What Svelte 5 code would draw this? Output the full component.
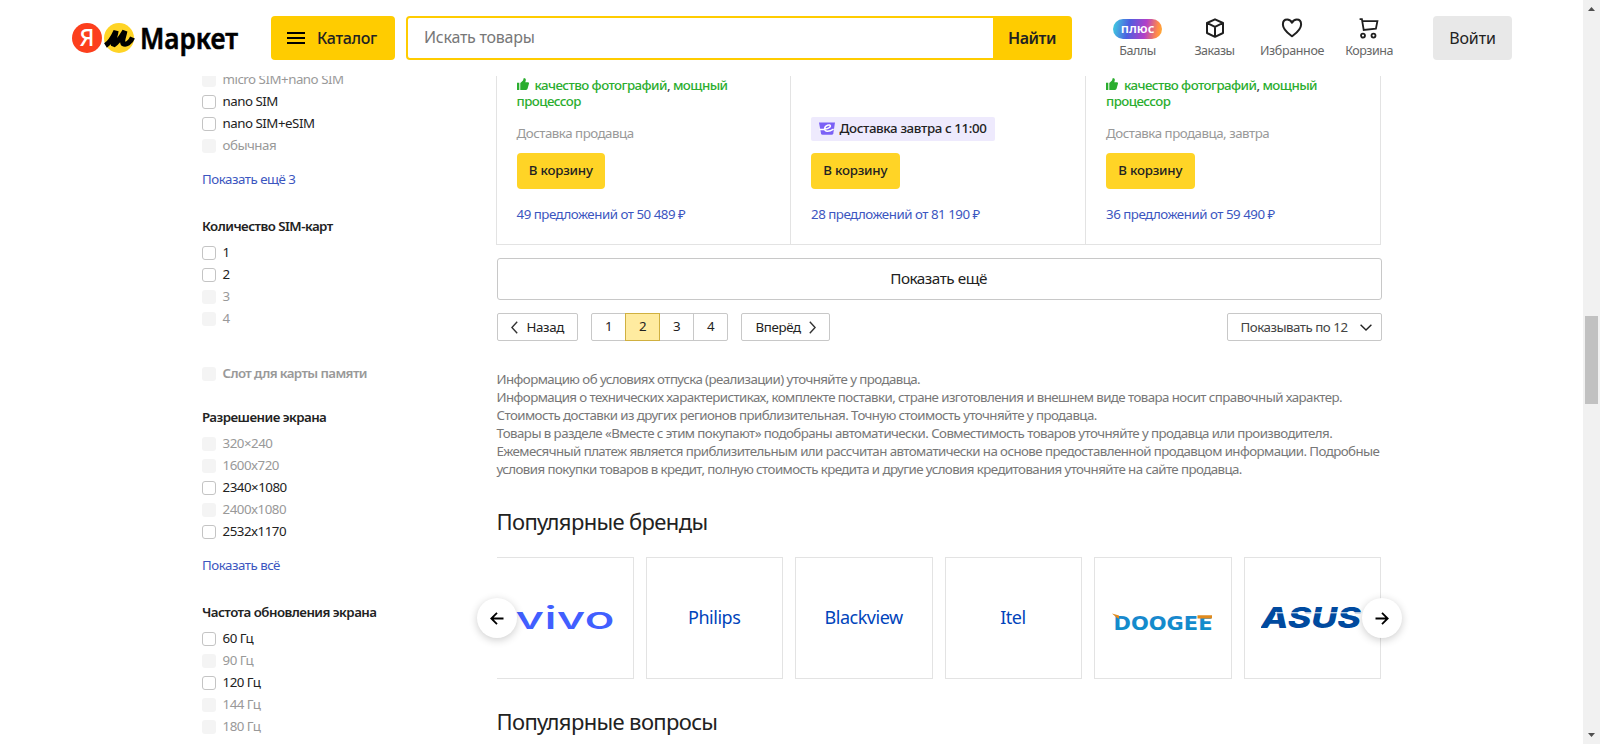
<script>
  const topRows = [
    { label: 'micro SIM+nano SIM', off: true },
    { label: 'nano SIM' },
    { label: 'nano SIM+eSIM' },
    { label: 'обычная', off: true }
  ];
  const filters = [
    { rows: topRows, more: 'Показать ещё 3' },
    {
      title: 'Количество SIM-карт',
      rows: [{ label: '1' }, { label: '2' }, { label: '3', off: true }, { label: '4', off: true }]
    },
    { single: true, rows: [{ label: 'Слот для карты памяти', off: true }] },
    {
      title: 'Разрешение экрана',
      rows: [
        { label: '320×240', off: true },
        { label: '1600x720', off: true },
        { label: '2340×1080' },
        { label: '2400x1080', off: true },
        { label: '2532x1170' }
      ],
      more: 'Показать всё'
    },
    {
      title: 'Частота обновления экрана',
      rows: [
        { label: '60 Гц' },
        { label: '90 Гц', off: true },
        { label: '120 Гц' },
        { label: '144 Гц', off: true },
        { label: '180 Гц', off: true }
      ]
    }
  ];
  const offers = [
    { pros: true, delivery: 'Доставка продавца', link: '49 предложений от 50 489 ₽' },
    { express: 'Доставка завтра с 11:00', link: '28 предложений от 81 190 ₽' },
    { pros: true, delivery: 'Доставка продавца, завтра', link: '36 предложений от 59 490 ₽' }
  ];
  const pages = [1, 2, 3, 4];
  const legal = [
    'Информацию об условиях отпуска (реализации) уточняйте у продавца.',
    'Информация о технических характеристиках, комплекте поставки, стране изготовления и внешнем виде товара носит справочный характер.',
    'Стоимость доставки из других регионов приблизительная. Точную стоимость уточняйте у продавца.',
    'Товары в разделе «Вместе с этим покупают» подобраны автоматически. Совместимость товаров уточняйте у продавца или производителя.',
    'Ежемесячный платеж является приблизительным или рассчитан автоматически на основе предоставленной продавцом информации. Подробные',
    'условия покупки товаров в кредит, полную стоимость кредита и другие условия кредитования уточняйте на сайте продавца.'
  ];
  const brands = ['vivo', 'Philips', 'Blackview', 'Itel', 'DOOGEE', 'ASUS'];
</script>

<div class="page">
  <div class="viewport">
    <header>
      <a class="logo" href="#top" aria-label="Яндекс Маркет">
        <svg width="62" height="30" viewBox="0 0 62 30">
          <circle cx="15" cy="15" r="15" fill="#fc3f1d" />
          <text x="15" y="23.2" text-anchor="middle" class="ya">Я</text>
          <circle cx="47" cy="15" r="15" fill="#ffd426" />
          <path d="M33.500 22.500C37.500 20 41 14.500 44 8 43.500 13 40.500 18.500 41.500 22 46 19.500 49.500 13.500 52.800 8 52 13 49.500 18 51 20.500 54 22.500 58.500 19.500 60.500 14.500" fill="none" stroke="#000" stroke-width="5.200" stroke-linejoin="bevel" />
        </svg>
        <svg width="100" height="38" viewBox="0 0 100 38">
          <text x="0" y="28" class="word" textLength="98" lengthAdjust="spacingAndGlyphs">Маркет</text>
        </svg>
      </a>
      <button class="catalog">
        <svg width="18" height="12" viewBox="0 0 18 12"><path d="M0 1h18M0 6h18M0 11h18" stroke="#000" stroke-width="2" /></svg>
        <span>Каталог</span>
      </button>
      <div class="search">
        <div class="field">Искать товары</div>
        <button>Найти</button>
      </div>
      <nav>
        <a class="n1" href="#plus"><span class="ic"><b class="plus">плюс</b></span><span>Баллы</span></a>
        <a class="n2" href="#orders">
          <span class="ic">
            <svg width="20" height="20" viewBox="0 0 20 20" fill="none" stroke="#1f1f1f" stroke-width="2" stroke-linejoin="round"><path d="M10 1.3 18 5v10l-8 3.800L2 15V5zM2.400 5.200 10 8.800l7.600-3.600M10 9v9.500" /></svg>
          </span>
          <span>Заказы</span>
        </a>
        <a class="n3" href="#fav">
          <span class="ic">
            <svg width="22" height="20" viewBox="0 0 22 20" fill="none" stroke="#1f1f1f" stroke-width="2" stroke-linejoin="round"><path d="M11 18.300C8.500 16.300 1.900 12 1.900 6.400 1.900 3.400 3.700 1.500 6.200 1.500c2.200 0 3.800 1.200 4.800 3.200 1-2 2.600-3.200 4.800-3.200 2.500 0 4.300 1.900 4.300 4.900 0 5.600-6.600 9.900-9.100 11.900z" /></svg>
          </span>
          <span>Избранное</span>
        </a>
        <a class="n4" href="#cart">
          <span class="ic">
            <svg width="20" height="21" viewBox="0 0 20 21" fill="none" stroke="#1f1f1f" stroke-width="1.800"><path d="M.6 1.200h2.300l1.800 10.700 12.200-1.300 1.500-7.500H3.400" /><circle cx="4" cy="17.600" r="2" /><circle cx="14.500" cy="17.600" r="2" /></svg>
          </span>
          <span>Корзина</span>
        </a>
      </nav>
      <button class="login">Войти</button>
    </header>

    <div class="body">
      <aside>
        {#each filters as group}
          <section class:single={group.single}>
            {#if group.title}<h4>{group.title}</h4>{/if}
            {#each group.rows as row}
              <label class:off={row.off}><i></i><span>{row.label}</span></label>
            {/each}
            {#if group.more}<a class="more" href="#more">{group.more}</a>{/if}
          </section>
        {/each}
      </aside>

      <main>
        <div class="offers">
          {#each offers as offer}
            <article>
              {#if offer.pros}
                <p class="pros">
                  <svg width="12" height="12" viewBox="0 0 12 12" fill="#2bad2f"><path d="M0 4.800h2.300V12H0zM3.300 5 6 2.600 6.800 0c1.400 0 2.200.9 2 2.200L8.300 4.200H11c.8 0 1.200.7 1 1.400l-1.400 5c-.2.900-.8 1.400-1.600 1.400H3.300z" /></svg>
                  качество фотографий<em>,</em> мощный процессор
                </p>
              {/if}
              {#if offer.express}
                <div class="express">
                  <svg width="16" height="13" viewBox="0 0 16 13"><path d="M0 .5h16L14.300 11.500Q14 12.700 12.800 12.700H3.500Q2.300 12.700 2 11.500z" fill="#7b61f6" /><path d="M.4 7.400C6.400 8 11.600 6 11.400 3.900 11.200 2 6 3 5.600 6.600c-.3 3.500 4.400 3.400 9 .6" fill="none" stroke="#fff" stroke-width="1.500" /></svg>
                  <span>{offer.express}</span>
                </div>
              {:else}
                <div class="delivery">{offer.delivery}</div>
              {/if}
              <button class="buy">В корзину</button>
              <a class="link" href="#offers">{offer.link}</a>
            </article>
          {/each}
        </div>

        <button class="show">Показать ещё</button>

        <div class="pager">
          <button class="prev">
            <svg width="7" height="13" viewBox="0 0 7 13" fill="none" stroke="#333" stroke-width="1.400"><path d="M6.200.8.900 6.500l5.300 5.700" /></svg>
            <span>Назад</span>
          </button>
          <div class="pages">
            {#each pages as n}<a href="#p{n}" class:active={n === 2}>{n}</a>{/each}
          </div>
          <button class="next">
            <span>Вперёд</span>
            <svg width="7" height="13" viewBox="0 0 7 13" fill="none" stroke="#333" stroke-width="1.400"><path d="M.8.800l5.300 5.700-5.300 5.700" /></svg>
          </button>
          <button class="count">
            <span>Показывать по 12</span>
            <svg width="12" height="7" viewBox="0 0 12 7" fill="none" stroke="#222" stroke-width="1.400"><path d="M.6.700 6 6 11.400.700" /></svg>
          </button>
        </div>

        <div class="legal">
          {#each legal as line}<div>{line}</div>{/each}
        </div>

        <h2>Популярные бренды</h2>
        <div class="carousel">
          <div class="track">
            {#each brands as brand}
              <a class="brand" class:first={brand === 'vivo'} href="#brand">
                {#if brand === 'vivo'}
                  <svg width="100" height="40" viewBox="0 0 100 40"><text x="0.500" y="31" class="vivo" textLength="99" lengthAdjust="spacingAndGlyphs">vivo</text></svg>
                {:else if brand === 'DOOGEE'}
                  <svg width="101" height="40" viewBox="0 0 101 40"><defs><linearGradient id="dg" x1="0" x2="0" y1="0" y2="1"><stop offset="0" stop-color="#1d86cf" /><stop offset="1" stop-color="#0c8fc9" /></linearGradient></defs><text x="1.500" y="32" class="doogee" textLength="99" lengthAdjust="spacingAndGlyphs">DOOGEE</text><path d="M0 15.500l7 2v3.300L4.500 19.500zM85.500 17.200H100v3.300H85.500z" fill="#e08a1e" /></svg>
                {:else if brand === 'ASUS'}
                  <svg width="101" height="40" viewBox="0 0 101 40"><text x="0" y="29.800" class="asus" textLength="100" lengthAdjust="spacingAndGlyphs">ASUS</text><path d="M14 14.800h86" stroke="#fff" stroke-width="1" /></svg>
                {:else}
                  <span>{brand}</span>
                {/if}
              </a>
            {/each}
          </div>
          <button class="arrow left" aria-label="Назад"><svg width="14" height="13" viewBox="0 0 14 13" fill="none" stroke="#000" stroke-width="1.800"><path d="M13.500 6.500H1.500M7 .8 1.300 6.500 7 12.200" /></svg></button>
          <button class="arrow right" aria-label="Вперёд"><svg width="14" height="13" viewBox="0 0 14 13" fill="none" stroke="#000" stroke-width="1.800"><path d="M.5 6.500h12M7 .8l5.700 5.700L7 12.200" /></svg></button>
        </div>
        <h2 class="second">Популярные вопросы</h2>
      </main>
    </div>
  </div>

  <div class="scrollbar">
    <svg width="7" height="4" viewBox="0 0 7 4"><path d="M0 4 3.500 0 7 4z" fill="#505050" /></svg>
    <div class="thumb"></div>
    <svg width="7" height="4" viewBox="0 0 7 4"><path d="M0 0 3.500 4 7 0z" fill="#505050" /></svg>
  </div>
</div>

<style>
  :global(body) { margin: 0; background: #fff; }
  .page { display: flex; height: 744px; overflow: hidden; color: #222; font: 13.300px/20px 'Noto Sans', 'Open Sans', sans-serif; letter-spacing: -0.480px; }
  .page * { box-sizing: border-box; }
  a { color: inherit; text-decoration: none; }
  button { font: inherit; letter-spacing: inherit; color: inherit; border: 0; padding: 0; margin: 0; background: none; white-space: nowrap; }
  svg { display: block; flex: none; }
  .viewport { width: 1583px; height: 744px; display: flex; flex-direction: column; overflow: hidden; }

  header { flex: none; height: 76px; padding: 16px 0 0 72px; display: flex; align-items: flex-start; }
  .logo { display: flex; gap: 6px; width: 199px; padding-top: 7px; }
  .logo svg { overflow: visible; }
  .logo svg + svg { margin-top: -2px; }
  .ya { font: 500 23px 'Noto Sans', sans-serif; fill: #fff; letter-spacing: 0; }
  .word { font: 600 29.500px 'Noto Sans', sans-serif; fill: #000; stroke: #000; stroke-width: 0.600px; letter-spacing: 0; }
  .catalog { width: 124px; height: 44px; border-radius: 4px; background: #fc0; display: flex; align-items: center; gap: 12px; padding-left: 16px; font-size: 16px; font-weight: 500; letter-spacing: -0.350px; }
  .search { margin-left: 11px; width: 666px; height: 44px; display: flex; border: 2px solid #fc0; border-radius: 4px; background: #fc0; }
  .field { width: 585px; background: #fff; border-radius: 2px 0 0 2px; padding-left: 16px; font-size: 16px; line-height: 38px; color: #777; letter-spacing: -0.250px; }
  .search button { flex: 1; padding-left: 1px; font-size: 16px; font-weight: 600; line-height: 37px; }
  nav { display: flex; margin-left: 41px; width: 320px; font-size: 12.500px; line-height: 16px; color: #666; }
  nav a { display: flex; flex-direction: column; align-items: center; white-space: nowrap; }
  .ic { height: 27px; display: flex; align-items: flex-start; padding-top: 2px; }
  .n1 { width: 49px; }
  .n2 { width: 42px; margin-left: 31.500px; }
  .n3 { width: 66px; margin-left: 23.500px; letter-spacing: -0.350px; }
  .n4 { width: 50px; margin-left: 19px; }
  .plus { width: 49px; height: 20px; margin-top: 1px; border-radius: 10px; color: #fff; font-weight: 600; font-size: 13px; line-height: 18px; text-align: center; letter-spacing: 0; background: linear-gradient(100deg, #3dd3e0 0%, #4d5fe0 32%, #b33fc8 65%, #ff8a4a 88%, #ffb52e 100%); }
  .login { width: 79px; height: 44px; border-radius: 4px; background: #e8e8e8; font-size: 16px; letter-spacing: -0.150px; }

  .body { flex: 1; display: flex; overflow: hidden; align-items: flex-start; padding-left: 202px; }
  aside { width: 294px; flex: none; margin-top: -7px; }
  section + section { margin-top: 27px; }
  section.single { margin-top: 33px; font-weight: 600; letter-spacing: -0.600px; }
  section.single + section { margin-top: 22px; }
  h4 { margin: 0 0 6px; font-size: 13.300px; font-weight: 600; line-height: 20px; letter-spacing: -0.530px; }
  label { display: flex; height: 22px; gap: 6.500px; }
  label i { width: 14px; height: 14px; margin-top: 4px; border: 1px solid #c4c4c4; border-radius: 3px; }
  label.off { color: #999; }
  label.off i { border: 0; background: #f4f4f4; }
  .more, .link { color: #3c56c0; }
  .more { display: block; margin-top: 12px; }

  main { width: 886px; flex: none; display: flex; flex-direction: column; }
  .offers { display: flex; height: 169px; width: 885px; border: solid #e3e3e3; border-width: 0 1px 1px 0; }
  article { width: 295px; border-left: 1px solid #e3e3e3; padding: 0 20px; display: flex; flex-direction: column; justify-content: flex-end; align-items: flex-start; padding-bottom: 20px; }
  article:first-child { width: 294px; padding-left: 19.500px; }
  .pros { margin: 0 0 14px; width: 225px; line-height: 16px; font-weight: 500; color: #2bad2f; letter-spacing: -0.560px; }
  .pros svg { display: inline-block; vertical-align: 0; margin-right: 3px; }
  .pros em { font-style: normal; color: #444; }
  .delivery { color: #999; margin-bottom: 10px; }
  .express { height: 24px; width: 184px; margin-bottom: 12px; border-radius: 2px; background: #eeeafd; display: flex; align-items: center; gap: 4.500px; padding: 0 8px 1px; font-weight: 500; line-height: 22px; white-space: nowrap; letter-spacing: -0.370px; }
  .express span { margin-top: -1px; }
  .buy { width: 88.500px; height: 36px; border-radius: 4px; background: #ffd426; font-weight: 500; line-height: 33px; padding-bottom: 2px; letter-spacing: -0.200px; }
  .link { margin-top: 15px; }

  .show { margin: 13px 0 0 1px; width: 885px; height: 42px; border: 1px solid #c8c8c8; border-radius: 3px; font-size: 15.300px; line-height: 38px; padding: 0 2px 2px 0; }
  .pager { margin: 13px 0 0 1px; width: 885px; height: 28px; display: flex; }
  .pager button, .pages { display: flex; align-items: center; border: 1px solid #c8c8c8; border-radius: 2px; line-height: 26px; }
  .prev { width: 81px; padding-left: 12.500px; gap: 9px; margin-right: 13px; letter-spacing: -0.350px; }
  .pages { width: 137px; }
  .pages a { flex: 1; text-align: center; height: 26px; line-height: 25px; }
  .pages a + a { border-left: 1px solid #c8c8c8; }
  .pages a.active { background: #ffeba0; border: 1px solid #d0b040; height: 28px; }
  .pages a.active + a { border-left: 0; }
  .next { margin-left: 13px; width: 89px; padding-left: 13.500px; gap: 8px; letter-spacing: -0.350px; }
  .next span, .prev span { margin-top: -1px; }
  .pager .count { margin-left: auto; width: 155px; padding-left: 12.500px; gap: 12px; color: #444; }

  .legal { margin: 29px 0 0 0.500px; color: #777; line-height: 18px; white-space: nowrap; letter-spacing: -0.570px; }
  h2 { margin: 27px 0 0 0.500px; font-size: 22px; font-weight: 400; line-height: 32px; letter-spacing: -0.640px; }
  .carousel { position: relative; margin: 20px 0 0 1px; width: 885px; height: 122px; }
  .track { display: flex; gap: 12px; height: 122px; width: 885px; overflow: hidden; }
  .brand { width: 137.400px; flex: none; height: 122px; border: 1px solid #e3e3e3; display: flex; align-items: center; justify-content: center; font-size: 18px; color: #04b; padding: 0 1px 2px 0; }
  .brand.first { width: 137px; border-left: 0; padding-right: 0; }
  .brand svg { margin-top: 2px; }
  .vivo { font: 500 31px Inter, sans-serif; fill: #415fff; letter-spacing: 0; }
  .doogee { font: 700 20px 'DejaVu Sans', sans-serif; fill: url(#dg); letter-spacing: 0; }
  .asus { font: italic 800 28px Inter, sans-serif; fill: #004a9f; letter-spacing: 0; }
  .arrow { position: absolute; top: 41px; width: 40px; height: 40px; border-radius: 50%; background: #fff; box-shadow: 0 2px 8px rgba(0, 0, 0, 0.200); display: flex; align-items: center; justify-content: center; }
  .left { left: -20px; }
  .right { right: -20px; }
  .second { margin-top: 26px; }

  .scrollbar { width: 17px; height: 744px; background: #f1f1f1; display: flex; flex-direction: column; align-items: center; justify-content: space-between; padding: 7px 0; }
  .thumb { width: 13px; height: 88px; background: #c1c1c1; margin-bottom: 24px; }
</style>
